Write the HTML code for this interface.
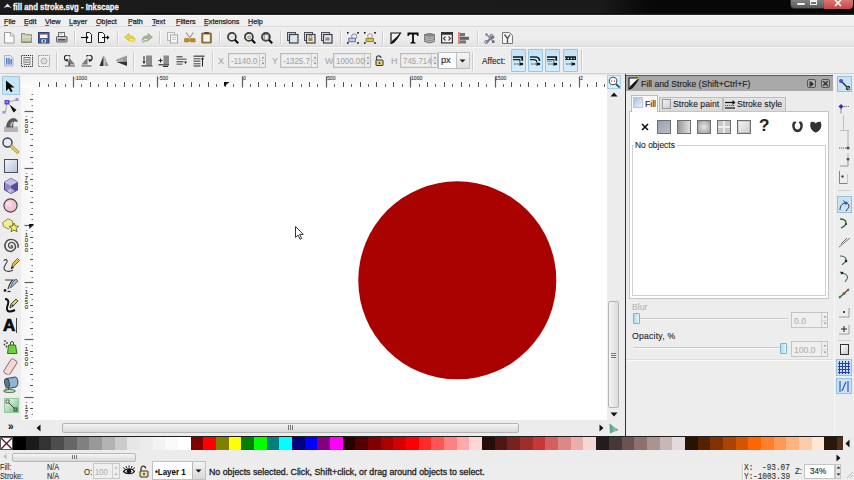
<!DOCTYPE html>
<html><head><meta charset="utf-8"><style>
*{margin:0;padding:0;box-sizing:border-box}
html,body{width:854px;height:480px;overflow:hidden}
body{background:#ededed;font-family:"Liberation Sans",sans-serif;position:relative;color:#1e1e1e}
.a{position:absolute}
.t{position:absolute;white-space:pre;line-height:1;-webkit-text-stroke:0.1px currentColor}
</style></head><body>
<!-- rulers -->
<div class="a" style="left:21px;top:74px;width:586px;height:14px;background:linear-gradient(#e8e8e8,#f4f4f4 2px,#fafafa 8px,#fdfdfd)"></div>
<div class="a" style="left:21px;top:88px;width:13px;height:332px;background:linear-gradient(90deg,#f6f6f6,#f8f8f8 4px,#fcfcfc)"></div>
<svg class="a" style="left:21px;top:74px" width="586" height="14"><path d="M18.5 8v5" stroke="#555"/><path d="M27.5 10v3" stroke="#666"/><path d="M35.5 8v5" stroke="#555"/><path d="M44.5 10v3" stroke="#666"/><path d="M52.5 2.5v11" stroke="#606060" stroke-width="1.2"/><path d="M60.5 10v3" stroke="#666"/><path d="M69.5 8v5" stroke="#555"/><path d="M77.5 10v3" stroke="#666"/><path d="M86.5 8v5" stroke="#555"/><path d="M94.5 10v3" stroke="#666"/><path d="M103.5 8v5" stroke="#555"/><path d="M111.5 10v3" stroke="#666"/><path d="M119.5 8v5" stroke="#555"/><path d="M128.5 10v3" stroke="#666"/><path d="M136.5 2.5v11" stroke="#606060" stroke-width="1.2"/><path d="M145.5 10v3" stroke="#666"/><path d="M153.5 8v5" stroke="#555"/><path d="M162.5 10v3" stroke="#666"/><path d="M170.5 8v5" stroke="#555"/><path d="M178.5 10v3" stroke="#666"/><path d="M187.5 8v5" stroke="#555"/><path d="M195.5 10v3" stroke="#666"/><path d="M204.5 8v5" stroke="#555"/><path d="M212.5 10v3" stroke="#666"/><path d="M221.5 2.5v11" stroke="#606060" stroke-width="1.2"/><path d="M229.5 10v3" stroke="#666"/><path d="M237.5 8v5" stroke="#555"/><path d="M246.5 10v3" stroke="#666"/><path d="M254.5 8v5" stroke="#555"/><path d="M263.5 10v3" stroke="#666"/><path d="M271.5 8v5" stroke="#555"/><path d="M280.5 10v3" stroke="#666"/><path d="M288.5 8v5" stroke="#555"/><path d="M296.5 10v3" stroke="#666"/><path d="M305.5 2.5v11" stroke="#606060" stroke-width="1.2"/><path d="M313.5 10v3" stroke="#666"/><path d="M322.5 8v5" stroke="#555"/><path d="M330.5 10v3" stroke="#666"/><path d="M339.5 8v5" stroke="#555"/><path d="M347.5 10v3" stroke="#666"/><path d="M355.5 8v5" stroke="#555"/><path d="M364.5 10v3" stroke="#666"/><path d="M372.5 8v5" stroke="#555"/><path d="M381.5 10v3" stroke="#666"/><path d="M389.5 2.5v11" stroke="#606060" stroke-width="1.2"/><path d="M398.5 10v3" stroke="#666"/><path d="M406.5 8v5" stroke="#555"/><path d="M414.5 10v3" stroke="#666"/><path d="M423.5 8v5" stroke="#555"/><path d="M431.5 10v3" stroke="#666"/><path d="M440.5 8v5" stroke="#555"/><path d="M448.5 10v3" stroke="#666"/><path d="M457.5 8v5" stroke="#555"/><path d="M465.5 10v3" stroke="#666"/><path d="M474.5 2.5v11" stroke="#606060" stroke-width="1.2"/><path d="M482.5 10v3" stroke="#666"/><path d="M490.5 8v5" stroke="#555"/><path d="M499.5 10v3" stroke="#666"/><path d="M507.5 8v5" stroke="#555"/><path d="M516.5 10v3" stroke="#666"/><path d="M524.5 8v5" stroke="#555"/><path d="M533.5 10v3" stroke="#666"/><path d="M541.5 8v5" stroke="#555"/><path d="M549.5 10v3" stroke="#666"/><path d="M558.5 2.5v11" stroke="#606060" stroke-width="1.2"/><path d="M566.5 10v3" stroke="#666"/><path d="M575.5 8v5" stroke="#555"/><path d="M583.5 10v3" stroke="#666"/><path d="M203 8h5.5l-5.5 4.5z" fill="#111"/></svg>
<div class="t" style="left:74px;top:75px;font-size:6px;color:#333;font-weight:normal;font-family:'Liberation Sans';transform:scaleX(0.85);transform-origin:0 0;">-1000</div>
<div class="t" style="left:158px;top:75px;font-size:6px;color:#333;font-weight:normal;font-family:'Liberation Sans';transform:scaleX(0.85);transform-origin:0 0;">-500</div>
<div class="t" style="left:243px;top:75px;font-size:6px;color:#333;font-weight:normal;font-family:'Liberation Sans';transform:scaleX(0.85);transform-origin:0 0;">0</div>
<div class="t" style="left:327px;top:75px;font-size:6px;color:#333;font-weight:normal;font-family:'Liberation Sans';transform:scaleX(0.85);transform-origin:0 0;">500</div>
<div class="t" style="left:411px;top:75px;font-size:6px;color:#333;font-weight:normal;font-family:'Liberation Sans';transform:scaleX(0.85);transform-origin:0 0;">1000</div>
<div class="t" style="left:495px;top:75px;font-size:6px;color:#333;font-weight:normal;font-family:'Liberation Sans';transform:scaleX(0.85);transform-origin:0 0;">1500</div>
<div class="t" style="left:580px;top:75px;font-size:6px;color:#333;font-weight:normal;font-family:'Liberation Sans';transform:scaleX(0.85);transform-origin:0 0;">2</div>
<svg class="a" style="left:21px;top:88px" width="13" height="332"><path d="M10.5 6.5h1.5" stroke="#777"/><path d="M9 11.5h3" stroke="#555"/><path d="M10.5 17.5h1.5" stroke="#777"/><path d="M3.5 23.5h9" stroke="#606060" stroke-width="1.2"/><path d="M10.5 29.5h1.5" stroke="#777"/><path d="M9 34.5h3" stroke="#555"/><path d="M10.5 40.5h1.5" stroke="#777"/><path d="M9 46.5h3" stroke="#555"/><path d="M10.5 51.5h1.5" stroke="#777"/><path d="M9 57.5h3" stroke="#555"/><path d="M10.5 63.5h1.5" stroke="#777"/><path d="M9 69.5h3" stroke="#555"/><path d="M10.5 74.5h1.5" stroke="#777"/><path d="M3.5 80.5h9" stroke="#606060" stroke-width="1.2"/><path d="M10.5 86.5h1.5" stroke="#777"/><path d="M9 91.5h3" stroke="#555"/><path d="M10.5 97.5h1.5" stroke="#777"/><path d="M9 103.5h3" stroke="#555"/><path d="M10.5 109.5h1.5" stroke="#777"/><path d="M9 114.5h3" stroke="#555"/><path d="M10.5 120.5h1.5" stroke="#777"/><path d="M9 126.5h3" stroke="#555"/><path d="M10.5 131.5h1.5" stroke="#777"/><path d="M3.5 137.5h9" stroke="#606060" stroke-width="1.2"/><path d="M10.5 143.5h1.5" stroke="#777"/><path d="M9 149.5h3" stroke="#555"/><path d="M10.5 154.5h1.5" stroke="#777"/><path d="M9 160.5h3" stroke="#555"/><path d="M10.5 166.5h1.5" stroke="#777"/><path d="M9 171.5h3" stroke="#555"/><path d="M10.5 177.5h1.5" stroke="#777"/><path d="M9 183.5h3" stroke="#555"/><path d="M10.5 189.5h1.5" stroke="#777"/><path d="M3.5 194.5h9" stroke="#606060" stroke-width="1.2"/><path d="M10.5 200.5h1.5" stroke="#777"/><path d="M9 206.5h3" stroke="#555"/><path d="M10.5 211.5h1.5" stroke="#777"/><path d="M9 217.5h3" stroke="#555"/><path d="M10.5 223.5h1.5" stroke="#777"/><path d="M9 229.5h3" stroke="#555"/><path d="M10.5 234.5h1.5" stroke="#777"/><path d="M9 240.5h3" stroke="#555"/><path d="M10.5 246.5h1.5" stroke="#777"/><path d="M3.5 251.5h9" stroke="#606060" stroke-width="1.2"/><path d="M10.5 257.5h1.5" stroke="#777"/><path d="M9 263.5h3" stroke="#555"/><path d="M10.5 269.5h1.5" stroke="#777"/><path d="M9 274.5h3" stroke="#555"/><path d="M10.5 280.5h1.5" stroke="#777"/><path d="M9 286.5h3" stroke="#555"/><path d="M10.5 291.5h1.5" stroke="#777"/><path d="M9 297.5h3" stroke="#555"/><path d="M10.5 303.5h1.5" stroke="#777"/><path d="M3.5 309.5h9" stroke="#606060" stroke-width="1.2"/><path d="M10.5 314.5h1.5" stroke="#777"/><path d="M9 320.5h3" stroke="#555"/><path d="M10.5 326.5h1.5" stroke="#777"/><path d="M8 136h5l-4.5 5z" fill="#111"/></svg>
<div class="t" style="left:24px;top:114px;font-size:6px;line-height:4.9px;color:#222;text-align:center;width:5px">-<br>5<br>0<br>0</div>
<div class="t" style="left:24px;top:171px;font-size:6px;line-height:4.9px;color:#222;text-align:center;width:5px">-<br>7<br>5<br>0</div>
<div class="t" style="left:24px;top:228px;font-size:6px;line-height:4.9px;color:#222;text-align:center;width:5px">-<br>1<br>0<br>0<br>0</div>
<div class="t" style="left:24px;top:285px;font-size:6px;line-height:4.9px;color:#222;text-align:center;width:5px">-<br>1<br>2<br>5<br>0</div>
<div class="t" style="left:24px;top:342px;font-size:6px;line-height:4.9px;color:#222;text-align:center;width:5px">-<br>1<br>5<br>0<br>0</div>
<div class="t" style="left:24px;top:400px;font-size:6px;line-height:4.9px;color:#222;text-align:center;width:5px">-<br>1<br>7<br>5<br>0</div>
<!-- canvas -->
<div class="a" style="left:34px;top:88px;width:573px;height:332px;background:#ffffff"></div>
<svg class="a" style="left:34px;top:88px" width="573" height="332"><circle cx="423.3" cy="192.35" r="99" fill="#a90000"/></svg>
<svg class="a" style="left:295px;top:226px" width="10" height="14" viewBox="0 0 10 14"><path d="M0.5 0.5v11l2.6-2.4 2 4.2 1.6-0.8-2-4.1h3.6z" fill="#fff" stroke="#222" stroke-width="0.9"/></svg>
<!-- scrollbars -->
<div class="a" style="left:607px;top:74px;width:18px;height:362px;background:#ececec"></div>
<div class="a" style="left:607px;top:75px;width:14px;height:14px;background:#daeef8;border:1px solid #a8d0e4"></div>
<svg class="a" style="left:608px;top:76px" width="12" height="12" viewBox="0 0 12 12"><circle cx="5" cy="5" r="3.8" fill="#fff" stroke="#405a60" stroke-width="1.1"/><path d="M3.5 4v2M6.5 4v2" stroke="#c04040" stroke-width="0.7"/><path d="M8 8l3.5 3.5" stroke="#203a40" stroke-width="1.6"/></svg>
<svg class="a" style="left:610px;top:92px" width="8" height="5" viewBox="0 0 8 5"><path d="M0.5 4.5l3.5-4 3.5 4z" fill="#111"/></svg>
<div class="a" style="left:608px;top:301px;width:11px;height:107px;border:1px solid #b4b4b4;border-radius:2px;background:linear-gradient(90deg,#f4f4f4,#dcdcdc)"></div>
<div class="a" style="left:611px;top:353px;width:5px;height:1px;background:#777;box-shadow:0 2px 0 #777,0 4px 0 #777"></div>
<svg class="a" style="left:610px;top:412px" width="8" height="5" viewBox="0 0 8 5"><path d="M0.5 0.5h7l-3.5 4z" fill="#111"/></svg>
<div class="a" style="left:21px;top:420px;width:586px;height:16px;background:#ececec"></div>
<svg class="a" style="left:36px;top:424px" width="5" height="8" viewBox="0 0 5 8"><path d="M4.5 0.5v7l-4-3.5z" fill="#111"/></svg>
<div class="a" style="left:62px;top:423px;width:457px;height:10px;border:1px solid #b4b4b4;border-radius:2px;background:linear-gradient(#f4f4f4,#d8d8d8)"></div>
<div class="a" style="left:288px;top:425px;width:1px;height:5px;background:#777;box-shadow:2px 0 0 #777,4px 0 0 #777"></div>
<svg class="a" style="left:599px;top:424px" width="5" height="8" viewBox="0 0 5 8"><path d="M0.5 0.5v7l4-3.5z" fill="#111"/></svg>
<svg class="a" style="left:608px;top:422px" width="12" height="13" viewBox="0 0 12 13"><defs><linearGradient id="cmg" x1="0" y1="0" x2="1" y2="0"><stop offset="0" stop-color="#4a9a7a"/><stop offset="0.6" stop-color="#8ac0a8"/><stop offset="1" stop-color="#806070"/></linearGradient></defs><path d="M1.5 1.5l9 6.5-8.5 3.5z" fill="url(#cmg)"/></svg>
<!-- dock -->
<div class="a" style="left:625px;top:74px;width:209px;height:362px;background:#ededed;border-left:1px solid #303030"></div>
<div class="a" style="left:626px;top:75px;width:207px;height:16px;background:#a8a8a8;border-top:1px solid #5c5c5c"></div>
<svg class="a" style="left:628px;top:77px" width="12" height="13" viewBox="0 0 12 13"><path d="M1 1h10l-3 5-4 5-3 1z" fill="#f4f4f4" stroke="#111" stroke-width="1.1"/><path d="M11 1l-3.5 6-4.5 4.5-2 1 1-3 4.5-4.5z" fill="#111"/><path d="M9.5 2l2-1.5" stroke="#e8e040" stroke-width="1.4"/></svg>
<div class="t" style="left:641px;top:79px;font-size:9.6px;color:#1a1a1a;font-weight:normal;font-family:'Liberation Sans';transform:scaleX(0.9);transform-origin:0 0;">Fill and Stroke (Shift+Ctrl+F)</div>
<div class="a" style="left:807px;top:79px;width:9px;height:9px;border:1px solid #555;border-radius:2px;background:#acacac"></div>
<svg class="a" style="left:809px;top:81px" width="5" height="6" viewBox="0 0 5 6"><path d="M0.5 0.5h1.5l3 2.5-3 2.5h-1.5z" fill="#333"/></svg>
<div class="a" style="left:821px;top:79px;width:9px;height:9px;border:1px solid #555;border-radius:2px;background:#acacac"></div>
<svg class="a" style="left:822px;top:80px" width="7" height="7" viewBox="0 0 7 7"><path d="M1.2 1.2l4.6 4.6M5.8 1.2l-4.6 4.6" stroke="#333" stroke-width="1.4"/></svg>
<div class="a" style="left:626px;top:91px;width:207px;height:20px;background:#ececec"></div>
<div class="a" style="left:659px;top:97px;width:64px;height:15px;background:linear-gradient(#e4e4e4,#d8d8d8);border:1px solid #bdbdbd;border-bottom:none"></div>
<div class="a" style="left:662px;top:99px;width:9px;height:10px;background:linear-gradient(135deg,#f2f2f2,#cfcfcf);border:1px solid #9a9a9a"></div>
<div class="t" style="left:673px;top:99px;font-size:9.6px;color:#1a1a1a;font-weight:normal;font-family:'Liberation Sans';transform:scaleX(0.9);transform-origin:0 0;">Stroke paint</div>
<div class="a" style="left:723px;top:97px;width:63px;height:15px;background:linear-gradient(#e4e4e4,#d8d8d8);border:1px solid #bdbdbd;border-bottom:none"></div>
<svg class="a" style="left:725px;top:99px" width="11" height="11" viewBox="0 0 11 11"><path d="M0 3.5h9" stroke="#111" stroke-width="1.2"/><path d="M7.5 1l3 2.5-3 2.5z" fill="#111"/><path d="M0 6.5h10" stroke="#333" stroke-width="0.9" stroke-dasharray="1.2 0.8"/><path d="M0 9h10" stroke="#111" stroke-width="1.2"/></svg>
<div class="t" style="left:737px;top:99px;font-size:9.6px;color:#1a1a1a;font-weight:normal;font-family:'Liberation Sans';transform:scaleX(0.9);transform-origin:0 0;">Stroke style</div>
<div class="a" style="left:629px;top:111px;width:200px;height:188px;background:#fff;border:1px solid #c4c4c4"></div>
<div class="a" style="left:631px;top:95px;width:27px;height:17px;background:#fafafa;border:1px solid #bdbdbd;border-bottom:none"></div>
<div class="a" style="left:633px;top:97px;width:10px;height:11px;background:linear-gradient(135deg,#a8c0e0,#eef2f8);border:1px solid #b8c8dc"></div>
<div class="t" style="left:645px;top:99px;font-size:9.6px;color:#1a1a1a;font-weight:normal;font-family:'Liberation Sans';transform:scaleX(0.9);transform-origin:0 0;">Fill</div>
<svg class="a" style="left:641px;top:123px" width="8" height="8" viewBox="0 0 8 8"><path d="M1 1l6 6M7 1l-6 6" stroke="#111" stroke-width="1.6"/></svg>
<div class="a" style="left:657px;top:120px;width:14px;height:14px;background:linear-gradient(135deg,#9aa2ae,#b8bec8);border:1px solid #6e6e6e"></div>
<div class="a" style="left:677px;top:120px;width:14px;height:14px;background:linear-gradient(90deg,#9a9a9a,#e0e0e0);border:1px solid #6e6e6e"></div>
<div class="a" style="left:697px;top:120px;width:14px;height:14px;background:radial-gradient(#e8e8e8,#9a9a9a);border:1px solid #6e6e6e"></div>
<div class="a" style="left:717px;top:120px;width:14px;height:14px;background:#c8c8c8;border:1px solid #6e6e6e"></div>
<div class="a" style="left:737px;top:120px;width:14px;height:14px;background:linear-gradient(135deg,#d8d8d8,#bdbdbd);border:1px solid #6e6e6e"></div>
<div class="a" style="left:718px;top:121px;width:12px;height:12px;background:linear-gradient(90deg,transparent 45%,#eee 45%,#eee 55%,transparent 55%),linear-gradient(transparent 45%,#eee 45%,#eee 55%,transparent 55%)"></div>
<div class="a" style="left:739px;top:122px;width:10px;height:10px;background:linear-gradient(135deg,#f0f0f0,#d0d0d0)"></div>
<div class="t" style="left:759px;top:117px;font-size:17px;color:#222;font-weight:bold;font-family:'Liberation Sans';">?</div>
<svg class="a" style="left:792px;top:121px" width="11" height="12" viewBox="0 0 11 12"><path d="M1.5 0.8c-1.5 1.5-1.5 4-1 6 0.8 3 3 4.5 5 4.5s4.2-1.5 5-4.5c0.5-2 0.5-4.5-1-6-0.8-0.5-2-0.5-2.8 0.3l0.3 0.8c1 0.5 1.3 2 1.3 3.2 0 2-1 3.5-2.8 3.5s-2.8-1.5-2.8-3.5c0-1.2 0.3-2.7 1.3-3.2l0.3-0.8c-0.8-0.8-2-0.8-2.8-0.3z" fill="#333"/></svg>
<svg class="a" style="left:810px;top:121px" width="12" height="12" viewBox="0 0 12 12"><path d="M0.8 1c-1.3 3.5-0.5 9 5 10.5 5.5-1.5 6.3-7 5-10.5-1.8-0.8-4-0.2-5 1.6-1-1.8-3.2-2.4-5-1.6z" fill="#333"/></svg>
<div class="a" style="left:632px;top:145px;width:194px;height:151px;border:1px solid #d0d0d0;box-shadow:inset 1px 1px 0 #fff"></div>
<div class="a" style="left:634px;top:140px;width:43px;height:10px;background:#fff"></div>
<div class="t" style="left:635px;top:140px;font-size:9.6px;color:#1a1a1a;font-weight:normal;font-family:'Liberation Sans';transform:scaleX(0.88);transform-origin:0 0;">No objects</div>
<div class="t" style="left:632px;top:302px;font-size:9.6px;color:#b8b8b8;font-weight:normal;font-family:'Liberation Sans';transform:scaleX(0.9);transform-origin:0 0;">Blur</div>
<div class="a" style="left:634px;top:318px;width:154px;height:2px;background:#c8c8c8;border-bottom:1px solid #f8f8f8"></div>
<div class="a" style="left:633px;top:313px;width:7px;height:11px;background:linear-gradient(90deg,#a8dcf0,#e4f6fc);border:1px solid #7ab4cc;border-radius:1px"></div>
<div class="a" style="left:791px;top:312px;width:37px;height:16px;background:#efefef;border:1px solid #c4c4c4"></div>
<div class="a" style="left:821px;top:313px;width:1px;height:14px;background:#cfcfcf"></div>
<div class="a" style="left:822px;top:320px;width:5px;height:1px;background:#d8d8d8"></div>
<svg class="a" style="left:823px;top:315px" width="4" height="3" viewBox="0 0 4 3"><path d="M0.5 2.5l1.5-2 1.5 2z" fill="#999"/></svg>
<svg class="a" style="left:823px;top:322px" width="4" height="3" viewBox="0 0 4 3"><path d="M0.5 0.5l1.5 2 1.5-2z" fill="#999"/></svg>
<div class="t" style="left:794px;top:316px;font-size:9.6px;color:#b0b0b0;font-weight:normal;font-family:'Liberation Sans';transform:scaleX(0.9);transform-origin:0 0;">0.0</div>
<div class="t" style="left:632px;top:331px;font-size:9.6px;color:#1a1a1a;font-weight:normal;font-family:'Liberation Sans';transform:scaleX(0.9);transform-origin:0 0;letter-spacing:0.25px;">Opacity, %</div>
<div class="a" style="left:634px;top:347px;width:154px;height:2px;background:#c8c8c8;border-bottom:1px solid #f8f8f8"></div>
<div class="a" style="left:780px;top:343px;width:7px;height:11px;background:linear-gradient(90deg,#a8dcf0,#e4f6fc);border:1px solid #7ab4cc;border-radius:1px"></div>
<div class="a" style="left:791px;top:341px;width:37px;height:16px;background:#efefef;border:1px solid #c4c4c4"></div>
<div class="a" style="left:821px;top:342px;width:1px;height:14px;background:#cfcfcf"></div>
<div class="a" style="left:822px;top:349px;width:5px;height:1px;background:#d8d8d8"></div>
<svg class="a" style="left:823px;top:344px" width="4" height="3" viewBox="0 0 4 3"><path d="M0.5 2.5l1.5-2 1.5 2z" fill="#999"/></svg>
<svg class="a" style="left:823px;top:351px" width="4" height="3" viewBox="0 0 4 3"><path d="M0.5 0.5l1.5 2 1.5-2z" fill="#999"/></svg>
<div class="t" style="left:794px;top:345px;font-size:9.6px;color:#b0b0b0;font-weight:normal;font-family:'Liberation Sans';transform:scaleX(0.9);transform-origin:0 0;">100.0</div>
<div class="a" style="left:626px;top:360px;width:207px;height:1px;background:#f8f8f8;box-shadow:0 -1px 0 #dedede"></div>
<!-- right commands -->
<div class="a" style="left:834px;top:74px;width:20px;height:362px;background:#ededed;border-left:1px solid #f8f8f8"></div>
<div class="a" style="left:837px;top:76px;width:15px;height:16px;background:#c8e4f4;border:1px solid #98c0d8"></div>
<svg class="a" style="left:838px;top:78px" width="13" height="13" viewBox="0 0 13 13"><path d="M3 3l7 7" stroke="#223" stroke-width="1.2"/><circle cx="3" cy="3" r="2" fill="#4a4ae0"/><circle cx="10" cy="10" r="2.2" fill="#1a1a1a"/><path d="M9 9l3 3" stroke="#6a9a9a" stroke-width="2"/></svg>
<svg class="a" style="left:837px;top:99px" width="14" height="15" viewBox="0 0 14 15"><path d="M4 7.5h8" stroke="#777" stroke-width="1" stroke-dasharray="1.5 0.8"/><path d="M4 7.5v7" stroke="#888" stroke-width="1"/><path d="M4 5l2.5 2.5-2.5 2.5-2.5-2.5z" fill="#3a30b0"/></svg>
<svg class="a" style="left:837px;top:115px" width="14" height="16" viewBox="0 0 14 16"><path d="M6.5 0v15M3 15.5h9" stroke="#bbb" stroke-width="0.9"/></svg>
<svg class="a" style="left:837px;top:131px" width="14" height="19" viewBox="0 0 14 19"><path d="M11 0v16" stroke="#aaa" stroke-width="0.9"/><path d="M2 17h9" stroke="#666" stroke-width="1" stroke-dasharray="1.2 0.8"/><circle cx="11" cy="17" r="1.6" fill="#555"/></svg>
<svg class="a" style="left:837px;top:152px" width="14" height="15" viewBox="0 0 14 15"><path d="M11 7v7M3 14h8" stroke="#888" stroke-width="0.9"/><circle cx="11" cy="7" r="1.5" fill="#555"/><path d="M11 1v4" stroke="#aaa" stroke-width="0.8"/></svg>
<svg class="a" style="left:837px;top:170px" width="14" height="15" viewBox="0 0 14 15"><path d="M2.5 1v12.5h8" stroke="#777" stroke-width="0.9" fill="none"/><path d="M10.5 4v9" stroke="#bbb" stroke-width="0.8"/><circle cx="5.5" cy="6.5" r="1.2" fill="#444"/></svg>
<div class="a" style="left:838px;top:190px;width:12px;height:1px;background:#d0d0d0"></div>
<div class="a" style="left:837px;top:196px;width:15px;height:17px;background:#c8e4f4;border:1px solid #98c0d8"></div>
<svg class="a" style="left:838px;top:198px" width="13" height="14" viewBox="0 0 13 14"><path d="M2 12c0-5 3-7 6-7c2 0 3 2 3 3c0 2-2 3-3 5" stroke="#333" stroke-width="1" fill="none"/><circle cx="8" cy="5" r="1.6" fill="#3a4ad0"/><path d="M8 5l-3-2.5" stroke="#3a4ad0" stroke-width="1"/></svg>
<svg class="a" style="left:838px;top:216px" width="13" height="14" viewBox="0 0 13 14"><path d="M2 3c3 0 6 1 6 4c0 3-3 4-5 5" stroke="#2a6a4a" stroke-width="1.3" fill="none"/><circle cx="8" cy="8" r="1" fill="#333"/></svg>
<svg class="a" style="left:838px;top:235px" width="13" height="14" viewBox="0 0 13 14"><path d="M1 12l11-9M3 9l6-6" stroke="#666" stroke-width="0.9"/></svg>
<svg class="a" style="left:838px;top:253px" width="13" height="14" viewBox="0 0 13 14"><path d="M2 3c3 0 6 1 6 4c0 3-3 3-4 5" stroke="#4a6a6a" stroke-width="1.2" fill="none"/><circle cx="8" cy="8" r="1.3" fill="#222"/></svg>
<svg class="a" style="left:838px;top:270px" width="13" height="14" viewBox="0 0 13 14"><path d="M2 2l5 2c2 1 3 3 2 5l-2 3" stroke="#4a7a6a" stroke-width="1.2" fill="none"/><circle cx="4" cy="3" r="1.3" fill="#222"/></svg>
<svg class="a" style="left:838px;top:287px" width="13" height="13" viewBox="0 0 13 13"><path d="M1 11l10-9" stroke="#c03030" stroke-width="1.6"/><circle cx="6" cy="6.5" r="1.5" fill="#2a8a4a"/><circle cx="2" cy="10" r="1.2" fill="#2a8a4a"/><circle cx="10" cy="3" r="1.2" fill="#2a8a4a"/></svg>
<svg class="a" style="left:838px;top:306px" width="13" height="13" viewBox="0 0 13 13"><path d="M1 11h10M11 2v9" stroke="#888" stroke-width="0.8"/><circle cx="6" cy="6" r="1.1" fill="#222"/></svg>
<svg class="a" style="left:838px;top:323px" width="13" height="13" viewBox="0 0 13 13"><path d="M1 11h10M11 2v9" stroke="#888" stroke-width="0.8"/><path d="M6 3v6M3 6h6" stroke="#222" stroke-width="1"/></svg>
<div class="a" style="left:838px;top:340px;width:12px;height:1px;background:#d0d0d0"></div>
<div class="a" style="left:840px;top:344px;width:9px;height:11px;border:1px solid #333;background:linear-gradient(135deg,#fff,#ccc)"></div>
<div class="a" style="left:836px;top:359px;width:16px;height:17px;background:#c8e4f4;border:1px solid #98c0d8"></div>
<svg class="a" style="left:838px;top:361px" width="12" height="13" viewBox="0 0 12 13"><path d="M0 2.5h12M0 5.5h12M0 8.5h12M0 11.5h12M1.5 0v13M4.5 0v13M7.5 0v13M10.5 0v13" stroke="#2a3ab0" stroke-width="1"/></svg>
<div class="a" style="left:836px;top:378px;width:16px;height:16px;background:#c8e4f4;border:1px solid #98c0d8"></div>
<svg class="a" style="left:838px;top:380px" width="12" height="13" viewBox="0 0 12 13"><path d="M2 1v11M10 1v11M4 11l4-9" stroke="#2a4ab0" stroke-width="1.1"/></svg>
<!-- toolbox -->
<div class="a" style="left:0;top:74px;width:21px;height:362px;background:#ededed"></div>
<div class="a" style="left:2px;top:76px;width:18px;height:19px;background:#c6e6f6;border:1px solid #9ec8e0;border-radius:1px"></div>
<svg class="a" style="left:5px;top:80px" width="10" height="13" viewBox="0 0 10 13"><path d="M1 0.5v10.5l2.8-2.6 2 3.8 1.8-0.9-2-3.7h3.9z" fill="#0a0a0a"/></svg>
<svg class="a" style="left:2px;top:97px" width="19" height="17" viewBox="0 0 19 17"><path d="M5 5l11-2M5 5l-1.5 10" stroke="#8a8ab8" stroke-width="0.8"/><rect x="2.5" y="3" width="5" height="4.5" fill="#5a48d0"/><rect x="4" y="4" width="2" height="2" fill="#8a80f0"/><rect x="13.5" y="1" width="3" height="3" fill="#9a90e0"/><rect x="0.5" y="14" width="3" height="2.5" fill="#9a90e8"/><path d="M7.5 7.5l7 5.5-3 2.6z" fill="#0a0a0a"/></svg>
<svg class="a" style="left:3px;top:117px" width="17" height="16" viewBox="0 0 17 16"><rect x="1" y="9" width="14" height="6" fill="#b4b4b4"/><rect x="1" y="9" width="14" height="1" fill="#d8d8d8"/><path d="M3.5 10c0.5-5 3-8.5 7-8.5c2.5 0 3.8 1.8 3.8 3.2c-1.5-1-3-0.8-3.8 0.4c-1 1.4-0.8 3.2-0.5 4.9z" fill="#5a5a62" stroke="#33333a" stroke-width="0.6"/><path d="M8 9.5c0-2 0.5-3.5 2-4.5" stroke="#c8d8b0" stroke-width="1.3" fill="none"/></svg>
<svg class="a" style="left:2px;top:137px" width="18" height="17" viewBox="0 0 18 17"><circle cx="5.5" cy="5.5" r="4.5" fill="#e6eaf4" stroke="#3a3e50" stroke-width="1.4"/><path d="M9.5 9.5l6 5.5" stroke="#a88a20" stroke-width="3.2" stroke-linecap="round"/><path d="M9.5 9.5l6 5.5" stroke="#e8d070" stroke-width="1.8" stroke-linecap="round"/></svg>
<div class="a" style="left:4px;top:159px;width:14px;height:14px;border:1.5px solid #4a4e5a;background:linear-gradient(135deg,#eef2f8,#b8c4d8)"></div>
<svg class="a" style="left:3px;top:178px" width="16" height="16" viewBox="0 0 16 16"><path d="M8 0.5l6.5 3.5v8l-6.5 3.5-6.5-3.5v-8z" fill="#9088c8" stroke="#3a3470" stroke-width="0.9"/><path d="M1.5 4l6.5 3.5 6.5-3.5" fill="none" stroke="#d0c8f0" stroke-width="0.7"/><path d="M8 7.5v8l6.5-3.5v-8z" fill="#5a4c9a"/><path d="M1.5 4l6.5-3.5 6.5 3.5-6.5 3.5z" fill="#c8c0ec"/><path d="M8 10l4 3-4 2.5-4-2.5z" fill="#ffffff" opacity="0.5"/></svg>
<svg class="a" style="left:3px;top:198px" width="15" height="15" viewBox="0 0 15 15"><circle cx="7.5" cy="7.5" r="6.6" fill="#f4c4d2" stroke="#4a3e44" stroke-width="1.1"/><circle cx="6" cy="6" r="3" fill="#fce0e8" opacity="0.8"/></svg>
<svg class="a" style="left:2px;top:218px" width="18" height="16" viewBox="0 0 18 16"><path d="M6 0.8l4.5 2.2 0.3 4.5-4.5 3.5-4.8-2.5-0.8-4z" fill="#f0ec98" stroke="#7a7440" stroke-width="0.8"/><path d="M12 5l1.4 3 3.2 0.3-2.4 2.2 0.8 3.2-3-1.6-3 1.6 0.8-3.2-2.4-2.2 3.2-0.3z" fill="#f4ee60" stroke="#5a5420" stroke-width="0.8"/></svg>
<svg class="a" style="left:2px;top:238px" width="18" height="17" viewBox="0 0 18 17"><path d="M9 8.5c0-1 1.5-1 1.5 0.2c0 1.6-2.5 2-3.5 0.3c-1.5-2.2 0.5-5 3-4.6c3.5 0.5 4.5 4.5 2.5 7c-2.5 3.2-7.5 2.5-9-1c-2-4.2 1-9 5.5-9c5 0 8 4 7 8.5" stroke="#4a4a4a" stroke-width="1.4" fill="none"/></svg>
<svg class="a" style="left:2px;top:258px" width="18" height="15" viewBox="0 0 18 15"><path d="M2 3c0-2 4-2 3 1c-1 2-3 4-3 6c0 4 6 4 9 2" stroke="#3a3a4a" stroke-width="1.1" fill="none"/><path d="M9 11l2-6 4.5-4.5 2 2-4.5 4.5z" fill="#e8c030" stroke="#5a4a10" stroke-width="0.8"/><path d="M9 11l1-3 2 2z" fill="#222"/></svg>
<svg class="a" style="left:2px;top:278px" width="18" height="15" viewBox="0 0 18 15"><path d="M3 2h8c-3 2-4 6-5 9" stroke="#3a3a3a" stroke-width="1.2" fill="none"/><circle cx="3" cy="12.5" r="1.4" fill="#222"/><path d="M8.5 10l1.5-5 4-4 2 2-4 4z" fill="#9cb8d8" stroke="#3a4a60" stroke-width="0.8"/><path d="M5.5 13.5h3" stroke="#222" stroke-width="1.2"/></svg>
<svg class="a" style="left:2px;top:297px" width="18" height="16" viewBox="0 0 18 16"><path d="M3 2c2 0 4 1 3 5c-1 3-2 6 0 7c2 1 5 0 7-1" stroke="#111" stroke-width="2" fill="none"/><path d="M8 11l1-4 5-5 2 2-5 5z" fill="#e8d040" stroke="#333" stroke-width="0.9"/><circle cx="10.5" cy="8.5" r="0.9" fill="#333"/></svg>
<div class="t" style="left:3px;top:317px;font-size:17px;color:#0a0a0a;font-weight:bold;font-family:'Liberation Sans';letter-spacing:-1px;-webkit-text-stroke:0.7px #0a0a0a;">A</div>
<div class="a" style="left:16px;top:318px;width:1px;height:15px;background:#444"></div>
<svg class="a" style="left:2px;top:339px" width="17" height="16" viewBox="0 0 17 16"><circle cx="3" cy="2" r="0.9" fill="#444"/><circle cx="5" cy="4" r="0.9" fill="#444"/><circle cx="2.5" cy="5.5" r="0.9" fill="#444"/><circle cx="4.5" cy="7.5" r="0.9" fill="#444"/><path d="M8.5 6v-2a1.5 1.5 0 0 1 3 0v2" stroke="#2a5a10" stroke-width="1" fill="none"/><path d="M6.5 6h7l1.5 8.5h-9.5z" fill="#6ad040" stroke="#2a6a10" stroke-width="0.9"/></svg>
<svg class="a" style="left:2px;top:357px" width="17" height="18" viewBox="0 0 17 18"><path d="M2 13.5l7-11c0.5-0.8 1.5-1 2.3-0.5l3 2c0.8 0.5 1 1.5 0.5 2.3l-7 11c-0.5 0.8-1.5 1-2.3 0.5l-3-2c-0.8-0.5-1-1.5-0.5-2.3z" fill="#f4d8d4" stroke="#7a5a58" stroke-width="0.9"/></svg>
<svg class="a" style="left:2px;top:376px" width="17" height="18" viewBox="0 0 17 18"><ellipse cx="7.5" cy="15" rx="6" ry="1.5" fill="#c8e0c0" stroke="#3a5a3a" stroke-width="0.9"/><path d="M5 2.5l8-1.5c1.5 0 2.5 1.5 2.8 4s-0.3 5.5-1.8 6l-8 1.5z" fill="#90b4d4" stroke="#2a3a4a" stroke-width="0.9"/><ellipse cx="5" cy="7.2" rx="2.3" ry="4.8" transform="rotate(-10 5 7.2)" fill="#5a7a90" stroke="#2a3a4a" stroke-width="0.9"/><path d="M4.5 9c-0.5 2-0.8 4-0.5 6" stroke="#5a8a5a" stroke-width="1" fill="none"/></svg>
<div class="a" style="left:4px;top:398px;width:15px;height:15px;background:linear-gradient(135deg,#f4faf4,#70c080);border:1px solid #90c8a0"></div>
<svg class="a" style="left:4px;top:398px" width="15" height="15" viewBox="0 0 15 15"><path d="M3.5 3.5l8 8" stroke="#333" stroke-width="0.9"/><rect x="2" y="2" width="3" height="3" fill="#fff" stroke="#333" stroke-width="0.8"/><rect x="10" y="10" width="3" height="3" fill="#6c6" stroke="#333" stroke-width="0.8"/></svg>
<div class="t" style="left:8px;top:422px;font-size:10px;color:#111;font-weight:bold;font-family:'Liberation Sans';">»</div>
<!-- title -->
<div class="a" style="left:0;top:0;width:854px;height:15px;background:linear-gradient(90deg,#1b1b1b 0,#1a1a1a 600px,#070707 650px,#070707 100%)"></div>
<div class="a" style="left:0;top:13px;width:854px;height:2px;background:linear-gradient(#050505,#303030)"></div>
<svg class="a" style="left:3px;top:2px" width="9" height="8" viewBox="0 0 9 8"><path d="M0.5 6 L4.5 1.5 L8.5 6 Q4.5 4.2 0.5 6Z" fill="#e0e0e0"/></svg>
<div class="t" style="left:13px;top:3px;font-size:8.8px;color:#f4f4f4;font-weight:bold;font-family:'Liberation Sans';transform:scaleX(0.88);transform-origin:0 0;-webkit-text-stroke:0.3px #f4f4f4;">fill and stroke.svg - Inkscape</div>
<div class="a" style="left:790px;top:-4px;width:63px;height:13px;border-radius:0 0 4px 4px;background:linear-gradient(#909090,#5a5a5a);border:1px solid #2a2a2a"></div>
<div class="a" style="left:824px;top:-4px;width:29px;height:13px;border-radius:0 0 4px 0;background:linear-gradient(#e88888,#c04848)"></div>
<div class="a" style="left:797px;top:3px;width:8px;height:2px;background:#f0f0f0;border-radius:1px"></div>
<div class="a" style="left:810px;top:0px;width:7px;height:5px;border:1.5px solid #f0f0f0;border-top-width:2px"></div>
<svg class="a" style="left:834px;top:0px" width="8" height="7" viewBox="0 0 8 7"><path d="M1 0 L7 6 M7 0 L1 6" stroke="#fafafa" stroke-width="1.6"/></svg>
<!-- menu -->
<div class="a" style="left:0;top:15px;width:854px;height:12px;background:#f0f0f0;border-top:1px solid #fbfbfb"></div>
<div class="t" style="left:4px;top:18px;font-size:7.9px;color:#1e1e1e;transform:scaleX(0.915);transform-origin:0 0;-webkit-text-stroke:0.25px #1e1e1e">File</div>
<div class="a" style="left:4px;top:25px;width:4px;height:1px;background:#666"></div>
<div class="t" style="left:24px;top:18px;font-size:7.9px;color:#1e1e1e;transform:scaleX(0.915);transform-origin:0 0;-webkit-text-stroke:0.25px #1e1e1e">Edit</div>
<div class="a" style="left:24px;top:25px;width:4px;height:1px;background:#666"></div>
<div class="t" style="left:45px;top:18px;font-size:7.9px;color:#1e1e1e;transform:scaleX(0.915);transform-origin:0 0;-webkit-text-stroke:0.25px #1e1e1e">View</div>
<div class="a" style="left:45px;top:25px;width:4px;height:1px;background:#666"></div>
<div class="t" style="left:69px;top:18px;font-size:7.9px;color:#1e1e1e;transform:scaleX(0.915);transform-origin:0 0;-webkit-text-stroke:0.25px #1e1e1e">Layer</div>
<div class="a" style="left:69px;top:25px;width:4px;height:1px;background:#666"></div>
<div class="t" style="left:96px;top:18px;font-size:7.9px;color:#1e1e1e;transform:scaleX(0.915);transform-origin:0 0;-webkit-text-stroke:0.25px #1e1e1e">Object</div>
<div class="a" style="left:96px;top:25px;width:4px;height:1px;background:#666"></div>
<div class="t" style="left:128px;top:18px;font-size:7.9px;color:#1e1e1e;transform:scaleX(0.915);transform-origin:0 0;-webkit-text-stroke:0.25px #1e1e1e">Path</div>
<div class="a" style="left:128px;top:25px;width:4px;height:1px;background:#666"></div>
<div class="t" style="left:152px;top:18px;font-size:7.9px;color:#1e1e1e;transform:scaleX(0.915);transform-origin:0 0;-webkit-text-stroke:0.25px #1e1e1e">Text</div>
<div class="a" style="left:152px;top:25px;width:4px;height:1px;background:#666"></div>
<div class="t" style="left:176px;top:18px;font-size:7.9px;color:#1e1e1e;transform:scaleX(0.915);transform-origin:0 0;-webkit-text-stroke:0.25px #1e1e1e">Filters</div>
<div class="a" style="left:176px;top:25px;width:4px;height:1px;background:#666"></div>
<div class="t" style="left:204px;top:18px;font-size:7.9px;color:#1e1e1e;transform:scaleX(0.915);transform-origin:0 0;-webkit-text-stroke:0.25px #1e1e1e">Extensions</div>
<div class="a" style="left:204px;top:25px;width:4px;height:1px;background:#666"></div>
<div class="t" style="left:248px;top:18px;font-size:7.9px;color:#1e1e1e;transform:scaleX(0.915);transform-origin:0 0;-webkit-text-stroke:0.25px #1e1e1e">Help</div>
<div class="a" style="left:248px;top:25px;width:4px;height:1px;background:#666"></div>
<!-- toolbar1 -->
<div class="a" style="left:0;top:26px;width:854px;height:21px;background:linear-gradient(#efefef,#ececec 60%,#e2e2e2);border-top:1px solid #dcdcdc"></div>
<div class="a" style="left:0;top:46px;width:854px;height:1px;background:#dadada"></div>
<svg class="a" style="left:4px;top:32px" width="11" height="12" viewBox="0 0 11 12"><path d="M0.5 0.5h6.5l3 3v7.5h-9.5z" fill="#fbfbfb" stroke="#9c9c9c"/><path d="M6.5 0.5v3.5h3.5" fill="none" stroke="#a8a8a8"/></svg>
<svg class="a" style="left:21px;top:32px" width="11" height="11" viewBox="0 0 11 11"><path d="M0.5 1.5h3.5l1 1.2h5.5v7.5h-10z" fill="#c9cdaa" stroke="#8e936c"/><path d="M1 5h9.5" stroke="#e4e6d0"/><path d="M0.5 10.2h10" stroke="#7c8060"/></svg>
<svg class="a" style="left:38px;top:32px" width="12" height="12" viewBox="0 0 12 12"><rect x="0.5" y="0.5" width="10.5" height="10.5" fill="#44629a" stroke="#2c4270"/><rect x="1" y="1" width="9.5" height="1.6" fill="#d83a3a"/><rect x="2" y="2.6" width="7.5" height="3.4" fill="#f6f6f6"/><rect x="3.5" y="7.5" width="4.5" height="3" fill="#d8dce8"/><rect x="5" y="8" width="1.5" height="2" fill="#2c4270"/></svg>
<svg class="a" style="left:56px;top:32px" width="12" height="11" viewBox="0 0 12 11"><rect x="2.5" y="0.5" width="6" height="4.5" fill="#fff" stroke="#707070"/><path d="M3.5 2h3" stroke="#999"/><rect x="0.5" y="4.5" width="10.5" height="5.5" rx="0.8" fill="#c8c8c8" stroke="#5a5a5a"/><rect x="2" y="7" width="7.5" height="1.6" fill="#505050"/></svg>
<div class="a" style="left:74px;top:31px;width:1px;height:13px;background:#cdcdcd;box-shadow:1px 0 0 #fafafa"></div>
<svg class="a" style="left:81px;top:32px" width="12" height="12" viewBox="0 0 12 12"><path d="M5.5 0.5h3l2 2v8h-5z" fill="#fff" stroke="#1a1a1a"/><path d="M0 5.5h6" stroke="#111" stroke-width="1.1"/><path d="M5.5 3.5l2.2 2-2.2 2z" fill="#111"/></svg>
<svg class="a" style="left:98px;top:32px" width="12" height="12" viewBox="0 0 12 12"><path d="M0.5 0.5h4l2 2v8h-6z" fill="#fff" stroke="#1a1a1a"/><path d="M4 5.5h6" stroke="#111" stroke-width="1.1"/><path d="M9 3.3l2.5 2.2-2.5 2.2z" fill="#111"/></svg>
<div class="a" style="left:117px;top:31px;width:1px;height:13px;background:#cdcdcd;box-shadow:1px 0 0 #fafafa"></div>
<svg class="a" style="left:124px;top:33px" width="12" height="11" viewBox="0 0 12 11"><path d="M0.5 4l4.5-3.5v2.2c3 0 6 1.3 6 4.8c-1-1.8-3-2.2-6-2.2v2.4z" fill="#e8d840" stroke="#c0b020" stroke-width="0.6"/><path d="M4.5 7.5c3 0 5 0.5 6 2" stroke="#e8d840" stroke-width="1.6" fill="none"/></svg>
<svg class="a" style="left:141px;top:33px" width="12" height="11" viewBox="0 0 12 11"><path d="M11.5 4l-4.5-3.5v2.2c-3 0-6 1.3-6 4.8c1-1.8 3-2.2 6-2.2v2.4z" fill="#a9b696" stroke="#8a9878" stroke-width="0.6"/><path d="M7.5 7.5c-3 0-5 0.5-6 2" stroke="#a9b696" stroke-width="1.6" fill="none"/></svg>
<div class="a" style="left:159px;top:31px;width:1px;height:13px;background:#cdcdcd;box-shadow:1px 0 0 #fafafa"></div>
<svg class="a" style="left:167px;top:32px" width="12" height="12" viewBox="0 0 12 12"><rect x="0.5" y="0.5" width="7" height="8" fill="#f4f4f4" stroke="#b8b8b8"/><rect x="3.5" y="3" width="7" height="8" fill="#f8f8f8" stroke="#a8a8a8"/><path d="M5 5.5h4M5 7.5h4" stroke="#c8c8c8"/></svg>
<svg class="a" style="left:184px;top:32px" width="12" height="11" viewBox="0 0 12 11"><path d="M2 0.5l4 5.5M9.5 0.5l-4 5.5" stroke="#9a9a9a" stroke-width="1.2"/><path d="M0.5 6.5h4.5l0.8 1 0.8-1h4.5v3.5h-4l-1.3-1.2-1.3 1.2h-4z" fill="#c28a24" stroke="#9c6c14" stroke-width="0.5"/></svg>
<svg class="a" style="left:201px;top:32px" width="12" height="12" viewBox="0 0 12 12"><rect x="0.8" y="1" width="9.5" height="10" rx="0.5" fill="#9a7a3c" stroke="#6e5420" stroke-width="0.8"/><rect x="2.3" y="2.5" width="6.5" height="7.2" fill="#f2f2f0"/><rect x="3.3" y="0" width="4.5" height="2" fill="#5a4a30"/></svg>
<div class="a" style="left:219px;top:31px;width:1px;height:13px;background:#cdcdcd;box-shadow:1px 0 0 #fafafa"></div>
<svg class="a" style="left:227px;top:32px" width="12" height="12" viewBox="0 0 12 12"><circle cx="4.9" cy="4.9" r="4" fill="#e8e8e8" stroke="#3a3a3a" stroke-width="1.7"/><rect x="2.8" y="4" width="4" height="2" fill="#dcdcdc"/><path d="M7.8 7.8l3.4 3.4" stroke="#0a0a0a" stroke-width="2"/></svg>
<svg class="a" style="left:244px;top:32px" width="12" height="12" viewBox="0 0 12 12"><circle cx="4.9" cy="4.9" r="4" fill="#e8e8e8" stroke="#3a3a3a" stroke-width="1.7"/><circle cx="5.3" cy="5.3" r="1.5" fill="#d8e060" stroke="#777" stroke-width="0.6"/><path d="M7.8 7.8l3.4 3.4" stroke="#0a0a0a" stroke-width="2"/></svg>
<svg class="a" style="left:261px;top:32px" width="12" height="12" viewBox="0 0 12 12"><circle cx="4.9" cy="4.9" r="4" fill="#e8e8e8" stroke="#3a3a3a" stroke-width="1.7"/><rect x="3.2" y="2.5" width="4" height="5.5" fill="#f0f0f0" stroke="#666" stroke-width="0.8"/><path d="M7.8 7.8l3.4 3.4" stroke="#0a0a0a" stroke-width="2"/></svg>
<div class="a" style="left:280px;top:31px;width:1px;height:13px;background:#cdcdcd;box-shadow:1px 0 0 #fafafa"></div>
<svg class="a" style="left:287px;top:32px" width="12" height="12" viewBox="0 0 12 12"><rect x="0.5" y="0.5" width="8" height="8" fill="#c8d4e4" stroke="#4a4e56"/><rect x="2.5" y="2.5" width="8.5" height="8.5" fill="#dce4ee" stroke="#3c4048" stroke-width="1.2"/></svg>
<svg class="a" style="left:304px;top:32px" width="12" height="12" viewBox="0 0 12 12"><rect x="0.5" y="0.5" width="8" height="8" fill="#e6e6e6" stroke="#4a4e56"/><rect x="2.5" y="2.5" width="8.5" height="8.5" fill="#e8e8e8" stroke="#3c4048" stroke-width="1.2"/><rect x="4.5" y="6" width="4" height="3" fill="#9a8a40"/><path d="M5.2 6v-1.2a1.3 1.3 0 0 1 2.6 0v1.2" stroke="#555" fill="none" stroke-width="0.7"/></svg>
<svg class="a" style="left:321px;top:32px" width="12" height="12" viewBox="0 0 12 12"><rect x="0.5" y="0.5" width="8" height="8" fill="#e0e0e0" stroke="#4a4e56"/><rect x="2.5" y="2.5" width="8.5" height="8.5" fill="#e4e4e4" stroke="#3c4048" stroke-width="1.2"/><rect x="4.5" y="5.5" width="4" height="3" fill="#888"/></svg>
<div class="a" style="left:340px;top:31px;width:1px;height:13px;background:#cdcdcd;box-shadow:1px 0 0 #fafafa"></div>
<svg class="a" style="left:347px;top:32px" width="12" height="12" viewBox="0 0 12 12"><rect x="0" y="0" width="1.6" height="1.6" fill="#111"/><rect x="10.2" y="0" width="1.6" height="1.6" fill="#111"/><rect x="0" y="10.2" width="1.6" height="1.6" fill="#111"/><rect x="10.2" y="10.2" width="1.6" height="1.6" fill="#111"/><circle cx="7.2" cy="4.5" r="2.6" fill="#e8eef8" stroke="#6a7898" stroke-width="0.9"/><rect x="1.8" y="6.2" width="6.5" height="3.5" fill="#c8d0e4" stroke="#5a6890" stroke-width="0.9"/></svg>
<svg class="a" style="left:364px;top:32px" width="12" height="12" viewBox="0 0 12 12"><rect x="0" y="0" width="1.6" height="1.6" fill="#111"/><rect x="10.2" y="0" width="1.6" height="1.6" fill="#111"/><rect x="0" y="10.2" width="1.6" height="1.6" fill="#111"/><rect x="10.2" y="10.2" width="1.6" height="1.6" fill="#111"/><circle cx="6" cy="4" r="2.4" fill="#eeeeee" stroke="#888" stroke-width="0.8"/><rect x="2" y="6.5" width="7.5" height="3.2" fill="#d8c050" stroke="#8a7420" stroke-width="0.8"/></svg>
<div class="a" style="left:382px;top:31px;width:1px;height:13px;background:#cdcdcd;box-shadow:1px 0 0 #fafafa"></div>
<svg class="a" style="left:390px;top:32px" width="12" height="12" viewBox="0 0 12 12"><path d="M1 1h9.5l-2.5 4-4 5-3 1.5z" fill="#f4f4f4" stroke="#111" stroke-width="1.2"/><path d="M10.5 1l-3 5.5-4.5 4.5-2 0.5 1-2.5 4.5-4z" fill="#111"/></svg>
<svg class="a" style="left:407px;top:32px" width="12" height="12" viewBox="0 0 12 12"><path d="M0.5 0.5h11v3.5h-1.2l-0.8-1.6h-2.6v7.4l1.6 0.6v1.1h-5v-1.1l1.6-0.6v-7.4h-2.6l-0.8 1.6h-1.2z" fill="#0a0a0a"/></svg>
<svg class="a" style="left:424px;top:33px" width="12" height="11" viewBox="0 0 12 11"><path d="M0.5 1.5l5-1 5 1v7l-5 1.5-5-1.5z" fill="#8a8a8a" stroke="#505050" stroke-width="0.7"/><path d="M0.5 3.5l5 1.2 5-1.2M0.5 5.5l5 1.2 5-1.2M0.5 7.5l5 1.2 5-1.2" stroke="#d0d0d0" stroke-width="0.7" fill="none"/></svg>
<svg class="a" style="left:441px;top:32px" width="12" height="12" viewBox="0 0 12 12"><rect x="0.6" y="0.6" width="10.8" height="10.3" fill="#f2f2f2" stroke="#333" stroke-width="1.2"/><rect x="1" y="1" width="10" height="1.8" fill="#333"/><path d="M4.5 4.5l-2 2 2 2M7.5 4.5l2 2-2 2" stroke="#444" fill="none" stroke-width="1.1"/></svg>
<svg class="a" style="left:458px;top:32px" width="12" height="12" viewBox="0 0 12 12"><path d="M1 0v12" stroke="#e04848" stroke-width="1.3"/><rect x="2" y="1" width="5" height="3.2" fill="#6d7478"/><rect x="2" y="4.8" width="9" height="3" fill="#5c6266"/><rect x="2" y="8.4" width="6" height="3" fill="#6d7478"/></svg>
<div class="a" style="left:477px;top:31px;width:1px;height:13px;background:#cdcdcd;box-shadow:1px 0 0 #fafafa"></div>
<svg class="a" style="left:484px;top:32px" width="12" height="12" viewBox="0 0 12 12"><path d="M2.5 10.5l7-7" stroke="#6c6a98" stroke-width="1.8"/><circle cx="2.3" cy="10" r="1.6" fill="none" stroke="#7a78a8" stroke-width="1"/><path d="M2 2l7.5 7.5" stroke="#8a8a90" stroke-width="1.6"/><path d="M1 2.5l1.5-1.5 1.2 1.2-1.5 1.5z" fill="#777"/><path d="M8.5 2.5a2 2 0 1 0 1.5 2" stroke="#7a7a86" stroke-width="1.2" fill="none"/><rect x="8" y="8.5" width="2.5" height="2.5" fill="#707078"/></svg>
<svg class="a" style="left:502px;top:32px" width="11" height="12" viewBox="0 0 11 12"><path d="M0.5 0.5h7l3 3v8h-10z" fill="#f6f6f6" stroke="#7a7a7a"/><path d="M2.5 2.5l3 4 2.5-4M5.5 6.5v4.5" stroke="#555" stroke-width="1.4" fill="none"/></svg>
<!-- toolbar2 -->
<div class="a" style="left:0;top:47px;width:854px;height:26px;background:#ededed;border-top:1px solid #f9f9f9"></div>
<div class="a" style="left:0;top:73px;width:854px;height:1px;background:#d0d0d0"></div>
<svg class="a" style="left:4px;top:55px" width="10" height="12" viewBox="0 0 10 12"><path d="M0.5 0.5h6l2.5 2.5v8h-8.5z" fill="#dce6f6" stroke="#a8b6cc"/><rect x="2" y="3" width="1.5" height="6.5" fill="#5c7cc0"/><rect x="4.2" y="3" width="1.5" height="6.5" fill="#5c7cc0"/><rect x="6.4" y="4" width="1.5" height="5.5" fill="#5c7cc0"/></svg>
<svg class="a" style="left:21px;top:55px" width="12" height="12" viewBox="0 0 12 12"><rect x="0.5" y="0.5" width="11" height="11" fill="#f4f4f4" stroke="#222" stroke-dasharray="1.2 0.9"/><rect x="3" y="2.5" width="6" height="7" fill="#eee" stroke="#666" stroke-width="0.8"/><path d="M4 4.5h4M4 6h4M4 7.5h4" stroke="#777" stroke-width="0.7"/></svg>
<svg class="a" style="left:38px;top:55px" width="12" height="12" viewBox="0 0 12 12"><rect x="0.5" y="0.5" width="11" height="11" fill="#f0f0f0" stroke="#8a8a8a" stroke-dasharray="1.2 0.9"/><circle cx="6" cy="6" r="3" fill="#ddd" stroke="#a0a0a0" stroke-width="0.8"/></svg>
<div class="a" style="left:56px;top:52px;width:1px;height:19px;background:#cdcdcd;box-shadow:1px 0 0 #fafafa"></div>
<svg class="a" style="left:64px;top:55px" width="12" height="12" viewBox="0 0 12 12"><path d="M5 2.5v7h6z" fill="#7a7a7a"/><path d="M1 10.5h10v1h-10z" fill="#555"/><path d="M6 1.5a3 3 0 1 0-2.5 4.5" stroke="#222" stroke-width="1.2" fill="none"/><path d="M1.5 4.5l2 2.2 0.5-2.6z" fill="#222"/><path d="M4.5 4v6.5h1.5z" fill="#222"/></svg>
<svg class="a" style="left:81px;top:55px" width="12" height="12" viewBox="0 0 12 12"><path d="M6.5 2.5v7h-6z" fill="#7a7a7a"/><path d="M0.5 10.5h10v1h-10z" fill="#555"/><path d="M5.5 1.5a3 3 0 1 1 2.5 4.5" stroke="#222" stroke-width="1.2" fill="none"/><path d="M10 4.5l-2 2.2-0.5-2.6z" fill="#222"/></svg>
<svg class="a" style="left:99px;top:55px" width="10" height="12" viewBox="0 0 10 12"><path d="M4.5 0.5l-4 10.5h4z" fill="#333"/><path d="M5.5 0.5l4 10.5h-4z" fill="#9a9a9a"/><path d="M6.3 4h1.5M6.3 6.5h2.2" stroke="#eee" stroke-width="0.8"/></svg>
<svg class="a" style="left:116px;top:55px" width="12" height="12" viewBox="0 0 12 12"><path d="M11 0.5l-10.5 4v2h10.5z" fill="#999"/><path d="M11 6.5v4.5l-10.5-4z" fill="#333"/><path d="M3 5h1.5M5.5 5h1.5" stroke="#eee" stroke-width="0.8"/></svg>
<div class="a" style="left:133px;top:52px;width:1px;height:19px;background:#cdcdcd;box-shadow:1px 0 0 #fafafa"></div>
<svg class="a" style="left:141px;top:55px" width="12" height="12" viewBox="0 0 12 12"><rect x="5" y="0.5" width="6" height="10" fill="#8c8c8c"/><rect x="0.5" y="10" width="11" height="1.6" fill="#6a6a6a"/><path d="M3 1v7" stroke="#222" stroke-width="1"/><path d="M1.5 6.5l1.5 2.5 1.5-2.5z" fill="#222"/></svg>
<svg class="a" style="left:158px;top:55px" width="12" height="12" viewBox="0 0 12 12"><rect x="5.5" y="0.5" width="5.5" height="10" fill="#8c8c8c"/><path d="M0.5 5.5h4M2.5 3.5v4" stroke="#222" stroke-width="1"/><rect x="0.5" y="9" width="10.5" height="1.5" fill="#5a5a5a"/><rect x="5" y="11" width="5" height="1" fill="#333"/></svg>
<svg class="a" style="left:176px;top:55px" width="12" height="12" viewBox="0 0 12 12"><rect x="0.5" y="1" width="6" height="1.4" fill="#666"/><rect x="0.5" y="3.5" width="10" height="1.4" fill="#777"/><rect x="0.5" y="6" width="7" height="1.4" fill="#666"/><rect x="0.5" y="8.5" width="6" height="1.4" fill="#777"/><path d="M8 6.5l3 0-1.5 2.5z" fill="#222"/></svg>
<svg class="a" style="left:193px;top:55px" width="12" height="12" viewBox="0 0 12 12"><rect x="0.5" y="0.5" width="11" height="1.4" fill="#555"/><rect x="0.5" y="3" width="7" height="1.4" fill="#777"/><rect x="0.5" y="5.5" width="7" height="1.4" fill="#666"/><rect x="0.5" y="8" width="7" height="1.4" fill="#777"/><rect x="0.5" y="10.3" width="7" height="1.4" fill="#666"/><path d="M9.5 3v8.5" stroke="#222" stroke-width="1"/><path d="M8 4.5l1.5-2.5 1.5 2.5z" fill="#222"/></svg>
<div class="a" style="left:212px;top:52px;width:1px;height:19px;background:#cdcdcd;box-shadow:1px 0 0 #fafafa"></div>
<div class="t" style="left:218px;top:57px;font-size:9px;color:#a8a8a8;font-weight:normal;font-family:'Liberation Sans';">X</div>
<div class="a" style="left:228px;top:53px;width:38px;height:15px;background:#efefef;border:1px solid #bcbcbc"></div>
<div class="a" style="left:229px;top:54px;width:29px;height:13px;border:1px solid #e2e2e2"></div>
<div class="a" style="left:259px;top:54px;width:1px;height:13px;background:#c8c8c8"></div>
<div class="a" style="left:260px;top:60px;width:5px;height:1px;background:#d0d0d0"></div>
<svg class="a" style="left:261px;top:56px" width="4" height="3" viewBox="0 0 4 3"><path d="M0.5 2.5l1.5-2 1.5 2z" fill="#888"/></svg>
<svg class="a" style="left:261px;top:62px" width="4" height="3" viewBox="0 0 4 3"><path d="M0.5 0.5l1.5 2 1.5-2z" fill="#888"/></svg>
<div class="t" style="left:231px;top:57px;font-size:9px;color:#a6a6a6;font-weight:normal;font-family:'Liberation Sans';transform:scaleX(0.88);transform-origin:0 0;">-1140.0</div>
<div class="t" style="left:272px;top:57px;font-size:9px;color:#a8a8a8;font-weight:normal;font-family:'Liberation Sans';">Y</div>
<div class="a" style="left:280px;top:53px;width:38px;height:15px;background:#efefef;border:1px solid #bcbcbc"></div>
<div class="a" style="left:281px;top:54px;width:29px;height:13px;border:1px solid #e2e2e2"></div>
<div class="a" style="left:311px;top:54px;width:1px;height:13px;background:#c8c8c8"></div>
<div class="a" style="left:312px;top:60px;width:5px;height:1px;background:#d0d0d0"></div>
<svg class="a" style="left:313px;top:56px" width="4" height="3" viewBox="0 0 4 3"><path d="M0.5 2.5l1.5-2 1.5 2z" fill="#888"/></svg>
<svg class="a" style="left:313px;top:62px" width="4" height="3" viewBox="0 0 4 3"><path d="M0.5 0.5l1.5 2 1.5-2z" fill="#888"/></svg>
<div class="t" style="left:283px;top:57px;font-size:9px;color:#a6a6a6;font-weight:normal;font-family:'Liberation Sans';transform:scaleX(0.88);transform-origin:0 0;">-1325.7</div>
<div class="t" style="left:325px;top:57px;font-size:9px;color:#a8a8a8;font-weight:normal;font-family:'Liberation Sans';">W</div>
<div class="a" style="left:333px;top:53px;width:38px;height:15px;background:#efefef;border:1px solid #bcbcbc"></div>
<div class="a" style="left:334px;top:54px;width:29px;height:13px;border:1px solid #e2e2e2"></div>
<div class="a" style="left:364px;top:54px;width:1px;height:13px;background:#c8c8c8"></div>
<div class="a" style="left:365px;top:60px;width:5px;height:1px;background:#d0d0d0"></div>
<svg class="a" style="left:366px;top:56px" width="4" height="3" viewBox="0 0 4 3"><path d="M0.5 2.5l1.5-2 1.5 2z" fill="#888"/></svg>
<svg class="a" style="left:366px;top:62px" width="4" height="3" viewBox="0 0 4 3"><path d="M0.5 0.5l1.5 2 1.5-2z" fill="#888"/></svg>
<div class="t" style="left:336px;top:57px;font-size:9px;color:#a6a6a6;font-weight:normal;font-family:'Liberation Sans';transform:scaleX(0.88);transform-origin:0 0;">1000.00</div>
<svg class="a" style="left:375px;top:55px" width="10" height="12" viewBox="0 0 10 12"><path d="M1.5 5v-2a2.2 2.2 0 0 1 4.4 0" stroke="#444" stroke-width="1.2" fill="none"/><rect x="1" y="5" width="7" height="5.5" rx="0.5" fill="#e8d878" stroke="#333" stroke-width="1"/><rect x="3.8" y="7" width="1.4" height="2" fill="#444"/></svg>
<div class="t" style="left:391px;top:57px;font-size:9px;color:#a8a8a8;font-weight:normal;font-family:'Liberation Sans';">H</div>
<div class="a" style="left:400px;top:53px;width:38px;height:15px;background:#efefef;border:1px solid #bcbcbc"></div>
<div class="a" style="left:401px;top:54px;width:29px;height:13px;border:1px solid #e2e2e2"></div>
<div class="a" style="left:431px;top:54px;width:1px;height:13px;background:#c8c8c8"></div>
<div class="a" style="left:432px;top:60px;width:5px;height:1px;background:#d0d0d0"></div>
<svg class="a" style="left:433px;top:56px" width="4" height="3" viewBox="0 0 4 3"><path d="M0.5 2.5l1.5-2 1.5 2z" fill="#888"/></svg>
<svg class="a" style="left:433px;top:62px" width="4" height="3" viewBox="0 0 4 3"><path d="M0.5 0.5l1.5 2 1.5-2z" fill="#888"/></svg>
<div class="t" style="left:403px;top:57px;font-size:9px;color:#a6a6a6;font-weight:normal;font-family:'Liberation Sans';transform:scaleX(0.88);transform-origin:0 0;">745.714</div>
<div class="a" style="left:438px;top:52px;width:32px;height:17px;background:#fbfbfb;border:1px solid #bdbdbd"></div>
<div class="a" style="left:456px;top:53px;width:13px;height:15px;background:linear-gradient(#f6f6f6,#dedede);border-left:1px solid #c0c0c0"></div>
<svg class="a" style="left:459px;top:59px" width="7" height="4" viewBox="0 0 7 4"><path d="M0.5 0.5h6l-3 3z" fill="#222"/></svg>
<div class="t" style="left:441px;top:56px;font-size:9.2px;color:#222;font-weight:normal;font-family:'Liberation Sans';">px</div>
<div class="a" style="left:472px;top:52px;width:1px;height:19px;background:#cdcdcd;box-shadow:1px 0 0 #fafafa"></div>
<div class="t" style="left:482px;top:57px;font-size:9px;color:#222;font-weight:normal;font-family:'Liberation Sans';transform:scaleX(0.92);transform-origin:0 0;">Affect:</div>
<div class="a" style="left:581px;top:50px;width:1px;height:21px;background:#cdcdcd;box-shadow:1px 0 0 #fafafa"></div>
<div class="a" style="left:511px;top:49px;width:15px;height:23px;background:linear-gradient(#c2e2f6,#d4eefa);border:1px solid #9cc4de;border-radius:1px"></div>
<svg class="a" style="left:513px;top:54px" width="12" height="13" viewBox="0 0 12 13"><path d="M0 3h9.2v3.8" stroke="#111" stroke-width="1.7" fill="none"/><path d="M0 5.6h6.8v1.8" stroke="#222" stroke-width="1.1" fill="none"/><path d="M1 10h5.5" stroke="#333" stroke-width="1" stroke-dasharray="0.9 0.5"/><path d="M6.5 8l3.5 2-3.5 2z" fill="#111"/><circle cx="9" cy="10" r="1.2" fill="#111"/></svg>
<div class="a" style="left:528px;top:49px;width:15px;height:23px;background:linear-gradient(#c2e2f6,#d4eefa);border:1px solid #9cc4de;border-radius:1px"></div>
<svg class="a" style="left:530px;top:54px" width="12" height="13" viewBox="0 0 12 13"><path d="M0 3h5.5c2.5 0 4 1.5 4 4" stroke="#1a2a34" stroke-width="1.7" fill="none"/><path d="M0 5.6h3.8c1.8 0 3 1 3 2.4" stroke="#1a2a34" stroke-width="1.1" fill="none"/><path d="M1 10h5.5" stroke="#333" stroke-width="1" stroke-dasharray="0.9 0.5"/><path d="M6.5 8l3.5 2-3.5 2z" fill="#111"/><circle cx="9" cy="10" r="1.2" fill="#111"/></svg>
<div class="a" style="left:545px;top:49px;width:15px;height:23px;background:linear-gradient(#c2e2f6,#d4eefa);border:1px solid #9cc4de;border-radius:1px"></div>
<svg class="a" style="left:547px;top:54px" width="12" height="13" viewBox="0 0 12 13"><path d="M0 3h9.2v3.8" stroke="#111" stroke-width="1.7" fill="none"/><path d="M0 5.6h6.8v1.8" stroke="#333" stroke-width="1.1" fill="none"/><path d="M0 7.3h5" stroke="#777" stroke-width="0.7"/><path d="M1 10h5.5" stroke="#333" stroke-width="1" stroke-dasharray="0.9 0.5"/><path d="M6.5 8l3.5 2-3.5 2z" fill="#111"/><circle cx="9" cy="10" r="1.2" fill="#111"/></svg>
<div class="a" style="left:563px;top:49px;width:15px;height:23px;background:linear-gradient(#c2e2f6,#d4eefa);border:1px solid #9cc4de;border-radius:1px"></div>
<svg class="a" style="left:565px;top:54px" width="12" height="13" viewBox="0 0 12 13"><path d="M0 3h11" stroke="#111" stroke-width="1.5"/><path d="M1.8 3v3M4.8 3v3M7.8 3v3M10.3 3v3" stroke="#111" stroke-width="1.4"/><path d="M0 5.5h11" stroke="#111" stroke-width="0.8"/><path d="M1 10h5.5" stroke="#333" stroke-width="1" stroke-dasharray="0.9 0.5"/><path d="M6.5 8l3.5 2-3.5 2z" fill="#111"/><circle cx="9" cy="10" r="1.2" fill="#111"/></svg>
<!-- palette -->
<div class="a" style="left:0;top:436px;width:854px;height:14px;background:#ececec"></div>
<div class="a" style="left:0;top:436px;width:843px;height:14px;overflow:hidden;background:#202020">
<div class="a" style="left:13.3px;top:1px;width:13.2px;height:13px;background:#000000"></div>
<div class="a" style="left:26.0px;top:1px;width:13.2px;height:13px;background:#1a1a1a"></div>
<div class="a" style="left:38.6px;top:1px;width:13.2px;height:13px;background:#333333"></div>
<div class="a" style="left:51.3px;top:1px;width:13.2px;height:13px;background:#4d4d4d"></div>
<div class="a" style="left:64.0px;top:1px;width:13.2px;height:13px;background:#666666"></div>
<div class="a" style="left:76.7px;top:1px;width:13.2px;height:13px;background:#808080"></div>
<div class="a" style="left:89.3px;top:1px;width:13.2px;height:13px;background:#999999"></div>
<div class="a" style="left:102.0px;top:1px;width:13.2px;height:13px;background:#b3b3b3"></div>
<div class="a" style="left:114.7px;top:1px;width:13.2px;height:13px;background:#cccccc"></div>
<div class="a" style="left:127.3px;top:1px;width:13.2px;height:13px;background:#e6e6e6"></div>
<div class="a" style="left:140.0px;top:1px;width:13.2px;height:13px;background:#ececec"></div>
<div class="a" style="left:152.7px;top:1px;width:13.2px;height:13px;background:#f2f2f2"></div>
<div class="a" style="left:165.3px;top:1px;width:13.2px;height:13px;background:#f9f9f9"></div>
<div class="a" style="left:178.0px;top:1px;width:13.2px;height:13px;background:#ffffff"></div>
<div class="a" style="left:190.7px;top:1px;width:13.2px;height:13px;background:#800000"></div>
<div class="a" style="left:203.4px;top:1px;width:13.2px;height:13px;background:#ff0000"></div>
<div class="a" style="left:216.0px;top:1px;width:13.2px;height:13px;background:#808000"></div>
<div class="a" style="left:228.7px;top:1px;width:13.2px;height:13px;background:#ffff00"></div>
<div class="a" style="left:241.4px;top:1px;width:13.2px;height:13px;background:#008000"></div>
<div class="a" style="left:254.0px;top:1px;width:13.2px;height:13px;background:#00ff00"></div>
<div class="a" style="left:266.7px;top:1px;width:13.2px;height:13px;background:#008080"></div>
<div class="a" style="left:279.4px;top:1px;width:13.2px;height:13px;background:#00ffff"></div>
<div class="a" style="left:292.0px;top:1px;width:13.2px;height:13px;background:#000080"></div>
<div class="a" style="left:304.7px;top:1px;width:13.2px;height:13px;background:#0000ff"></div>
<div class="a" style="left:317.4px;top:1px;width:13.2px;height:13px;background:#800080"></div>
<div class="a" style="left:330.1px;top:1px;width:13.2px;height:13px;background:#ff00ff"></div>
<div class="a" style="left:342.7px;top:1px;width:13.2px;height:13px;background:#2b0000"></div>
<div class="a" style="left:355.4px;top:1px;width:13.2px;height:13px;background:#550000"></div>
<div class="a" style="left:368.1px;top:1px;width:13.2px;height:13px;background:#800000"></div>
<div class="a" style="left:380.7px;top:1px;width:13.2px;height:13px;background:#aa0000"></div>
<div class="a" style="left:393.4px;top:1px;width:13.2px;height:13px;background:#d40000"></div>
<div class="a" style="left:406.1px;top:1px;width:13.2px;height:13px;background:#ff0000"></div>
<div class="a" style="left:418.7px;top:1px;width:13.2px;height:13px;background:#ff2a2a"></div>
<div class="a" style="left:431.4px;top:1px;width:13.2px;height:13px;background:#ff5555"></div>
<div class="a" style="left:444.1px;top:1px;width:13.2px;height:13px;background:#ff8080"></div>
<div class="a" style="left:456.8px;top:1px;width:13.2px;height:13px;background:#ffaaaa"></div>
<div class="a" style="left:469.4px;top:1px;width:13.2px;height:13px;background:#ffd5d5"></div>
<div class="a" style="left:482.1px;top:1px;width:13.2px;height:13px;background:#280b0b"></div>
<div class="a" style="left:494.8px;top:1px;width:13.2px;height:13px;background:#501616"></div>
<div class="a" style="left:507.4px;top:1px;width:13.2px;height:13px;background:#782121"></div>
<div class="a" style="left:520.1px;top:1px;width:13.2px;height:13px;background:#a02c2c"></div>
<div class="a" style="left:532.8px;top:1px;width:13.2px;height:13px;background:#c83737"></div>
<div class="a" style="left:545.4px;top:1px;width:13.2px;height:13px;background:#d35f5f"></div>
<div class="a" style="left:558.1px;top:1px;width:13.2px;height:13px;background:#de8787"></div>
<div class="a" style="left:570.8px;top:1px;width:13.2px;height:13px;background:#e9afaf"></div>
<div class="a" style="left:583.4px;top:1px;width:13.2px;height:13px;background:#f4d7d7"></div>
<div class="a" style="left:596.1px;top:1px;width:13.2px;height:13px;background:#241c1c"></div>
<div class="a" style="left:608.8px;top:1px;width:13.2px;height:13px;background:#483737"></div>
<div class="a" style="left:621.5px;top:1px;width:13.2px;height:13px;background:#6c5353"></div>
<div class="a" style="left:634.1px;top:1px;width:13.2px;height:13px;background:#916f6f"></div>
<div class="a" style="left:646.8px;top:1px;width:13.2px;height:13px;background:#ac9393"></div>
<div class="a" style="left:659.5px;top:1px;width:13.2px;height:13px;background:#c8b7b7"></div>
<div class="a" style="left:672.1px;top:1px;width:13.2px;height:13px;background:#e3dbdb"></div>
<div class="a" style="left:684.8px;top:1px;width:13.2px;height:13px;background:#2b1100"></div>
<div class="a" style="left:697.5px;top:1px;width:13.2px;height:13px;background:#552200"></div>
<div class="a" style="left:710.1px;top:1px;width:13.2px;height:13px;background:#803300"></div>
<div class="a" style="left:722.8px;top:1px;width:13.2px;height:13px;background:#aa4400"></div>
<div class="a" style="left:735.5px;top:1px;width:13.2px;height:13px;background:#d45500"></div>
<div class="a" style="left:748.2px;top:1px;width:13.2px;height:13px;background:#ff6600"></div>
<div class="a" style="left:760.8px;top:1px;width:13.2px;height:13px;background:#ff7f2a"></div>
<div class="a" style="left:773.5px;top:1px;width:13.2px;height:13px;background:#ff9955"></div>
<div class="a" style="left:786.2px;top:1px;width:13.2px;height:13px;background:#ffb380"></div>
<div class="a" style="left:798.8px;top:1px;width:13.2px;height:13px;background:#ffccaa"></div>
<div class="a" style="left:811.5px;top:1px;width:13.2px;height:13px;background:#ffe6d5"></div>
<div class="a" style="left:824.2px;top:1px;width:13.2px;height:13px;background:#28170b"></div>
<div class="a" style="left:836.8px;top:1px;width:13.2px;height:13px;background:#502d16"></div>
</div>
<svg class="a" style="left:0px;top:437px" width="13" height="13" viewBox="0 0 13 13"><rect x="0" y="0" width="13" height="13" fill="#fff"/><path d="M0.5 0.5l12 12M12.5 0.5l-12 12" stroke="#5a1020" stroke-width="1.3"/><rect x="0.5" y="0.5" width="12" height="12" fill="none" stroke="#555" stroke-width="1"/></svg>
<svg class="a" style="left:845px;top:439px" width="5" height="9" viewBox="0 0 5 9"><path d="M4.5 0.5v8l-4-4z" fill="#111"/></svg>
<div class="a" style="left:0;top:450px;width:854px;height:12px;background:#ececec"></div>
<svg class="a" style="left:3px;top:453px" width="4" height="7" viewBox="0 0 4 7"><path d="M3.5 0.5v6l-3-3z" fill="#bbb"/></svg>
<div class="a" style="left:12px;top:453px;width:124px;height:9px;border:1px solid #b8b8b8;border-radius:2px;background:linear-gradient(#f6f6f6,#d8d8d8)"></div>
<div class="a" style="left:72px;top:455px;width:1px;height:4px;background:#777;box-shadow:2px 0 0 #777,4px 0 0 #777"></div>
<svg class="a" style="left:836px;top:454px" width="5" height="8" viewBox="0 0 5 8"><path d="M0.5 0.5v7l4-3.5z" fill="#111"/></svg>
<!-- status -->
<div class="a" style="left:0;top:462px;width:854px;height:18px;background:#ededed"></div>
<div class="t" style="left:0px;top:463px;font-size:8.6px;color:#333;font-weight:normal;font-family:'Liberation Sans';transform:scaleX(0.85);transform-origin:0 0;">Fill:</div>
<div class="t" style="left:0px;top:472px;font-size:8.6px;color:#333;font-weight:normal;font-family:'Liberation Sans';transform:scaleX(0.85);transform-origin:0 0;">Stroke:</div>
<div class="t" style="left:47px;top:463px;font-size:8.6px;color:#333;font-weight:normal;font-family:'Liberation Sans';transform:scaleX(0.85);transform-origin:0 0;">N/A</div>
<div class="t" style="left:47px;top:472px;font-size:8.6px;color:#333;font-weight:normal;font-family:'Liberation Sans';transform:scaleX(0.85);transform-origin:0 0;">N/A</div>
<div class="t" style="left:84px;top:468px;font-size:8.6px;color:#333;font-weight:normal;font-family:'Liberation Sans';transform:scaleX(0.9);transform-origin:0 0;">O:</div>
<div class="a" style="left:93px;top:463px;width:27px;height:16px;background:#efefef;border:1px solid #c8c8c8"></div>
<div class="a" style="left:112px;top:464px;width:1px;height:14px;background:#d0d0d0"></div>
<svg class="a" style="left:114px;top:466px" width="4" height="3" viewBox="0 0 4 3"><path d="M0.5 2.5l1.5-2 1.5 2z" fill="#aaa"/></svg>
<svg class="a" style="left:114px;top:473px" width="4" height="3" viewBox="0 0 4 3"><path d="M0.5 0.5l1.5 2 1.5-2z" fill="#aaa"/></svg>
<div class="t" style="left:95px;top:468px;font-size:8.6px;color:#b0b0b0;font-weight:normal;font-family:'Liberation Sans';transform:scaleX(0.9);transform-origin:0 0;">100</div>
<svg class="a" style="left:123px;top:465px" width="12" height="10" viewBox="0 0 12 10"><path d="M0.5 6.5c2.5-3.5 9-3.5 11 0-2 3-8.5 3-11 0z" fill="#fff" stroke="#111" stroke-width="1.2"/><circle cx="6" cy="6.3" r="2.3" fill="#111"/><path d="M1.5 4l-1-1.5M3.5 3l-0.5-1.8M6 2.5v-2M8.5 3l0.5-1.8M10.5 4l1-1.5" stroke="#111" stroke-width="1"/></svg>
<svg class="a" style="left:139px;top:465px" width="10" height="13" viewBox="0 0 10 13"><path d="M2 6v-2.5a2.3 2.3 0 0 1 4.6 0" stroke="#333" stroke-width="1.2" fill="none"/><rect x="1" y="6" width="8" height="6" rx="0.5" fill="#e8e090" stroke="#333" stroke-width="1"/><rect x="4.3" y="8" width="1.4" height="2" fill="#333"/></svg>
<div class="a" style="left:152px;top:461px;width:54px;height:19px;background:#fff;border:1px solid #c0c0c0"></div>
<div class="a" style="left:192px;top:462px;width:13px;height:17px;background:linear-gradient(#f4f4f4,#d8d8d8);border-left:1px solid #b8b8b8"></div>
<svg class="a" style="left:195px;top:469px" width="7" height="4" viewBox="0 0 7 4"><path d="M0.5 0.5h6l-3 3z" fill="#111"/></svg>
<div class="t" style="left:155px;top:468px;font-size:8.4px;color:#111;font-weight:bold;font-family:'Liberation Sans';transform:scaleX(0.95);transform-origin:0 0;">•Layer 1</div>
<div class="t" style="left:209px;top:467px;font-size:9.4px;color:#222;font-weight:normal;font-family:'Liberation Sans';transform:scaleX(0.937);transform-origin:0 0;-webkit-text-stroke:0.3px #222;">No objects selected. Click, Shift+click, or drag around objects to select.</div>
<div class="a" style="left:742px;top:463px;width:1px;height:17px;background:#d0d0d0;box-shadow:1px 0 0 #fafafa"></div>
<div class="t" style="left:744px;top:464px;font-size:8.6px;color:#333;font-weight:normal;font-family:'Liberation Mono';transform:scaleX(0.9);transform-origin:0 0;">X:</div>
<div class="t" style="left:762px;top:464px;font-size:8.6px;color:#333;font-weight:normal;font-family:'Liberation Mono';transform:scaleX(0.9);transform-origin:0 0;">-93.07</div>
<div class="t" style="left:744px;top:473px;font-size:8.6px;color:#333;font-weight:normal;font-family:'Liberation Mono';transform:scaleX(0.9);transform-origin:0 0;">Y:</div>
<div class="t" style="left:753px;top:473px;font-size:8.6px;color:#333;font-weight:normal;font-family:'Liberation Mono';transform:scaleX(0.9);transform-origin:0 0;">-1003.39</div>
<div class="t" style="left:795px;top:467px;font-size:8.6px;color:#333;font-weight:normal;font-family:'Liberation Sans';transform:scaleX(0.9);transform-origin:0 0;">Z:</div>
<div class="a" style="left:804px;top:464px;width:31px;height:15px;background:#fff;border:1px solid #c4c4c4"></div>
<div class="t" style="left:810px;top:467px;font-size:8.6px;color:#222;font-weight:normal;font-family:'Liberation Sans';transform:scaleX(0.95);transform-origin:0 0;">34%</div>
<div class="a" style="left:835px;top:464px;width:6px;height:15px;background:#e4e4e4;border:1px solid #c4c4c4"></div>
<svg class="a" style="left:836px;top:466px" width="5" height="3" viewBox="0 0 5 3"><path d="M0.5 2.5l2-2 2 2z" fill="#222"/></svg>
<svg class="a" style="left:836px;top:473px" width="5" height="3" viewBox="0 0 5 3"><path d="M0.5 0.5l2 2 2-2z" fill="#222"/></svg>
<svg class="a" style="left:846px;top:471px" width="8" height="8" viewBox="0 0 8 8"><path d="M7 1l-6 6M7 4l-3 3" stroke="#aaa" stroke-width="0.8"/></svg>
</body></html>
